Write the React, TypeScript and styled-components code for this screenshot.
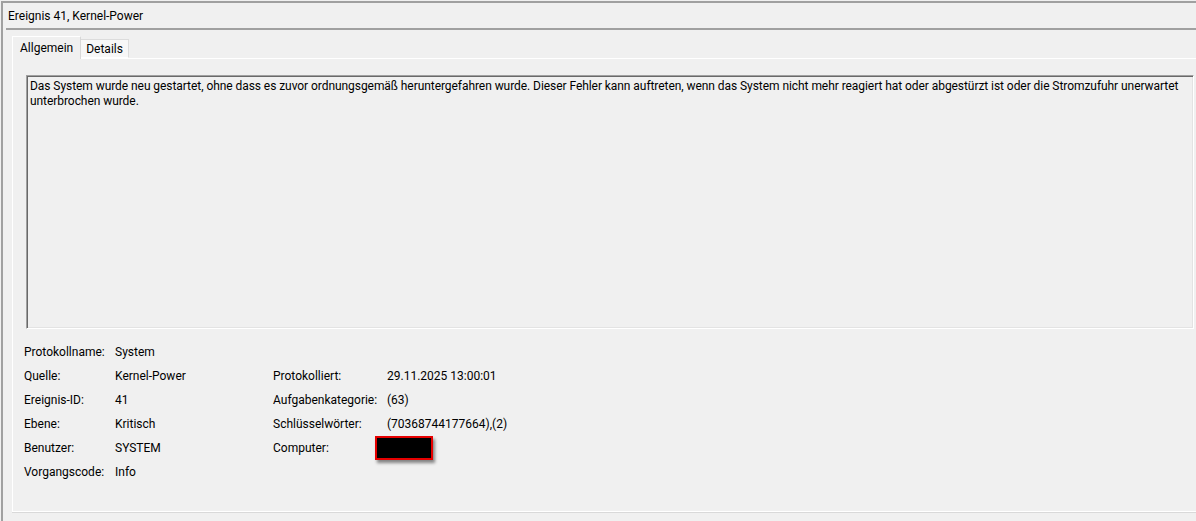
import React from "react";
import styled, { createGlobalStyle } from "styled-components";

const GlobalStyle = createGlobalStyle`
  html, body {
    margin: 0;
    padding: 0;
    background: #f0f0f0;
    overflow: hidden;
  }
  body {
    font-family: Roboto, "Liberation Sans", Arial, sans-serif;
    font-size: 12px;
    color: #000;
  }
`;

const Window = styled.div`
  width: 1212px;
  height: 518px;
  margin: 1px 0 0 1px;
  border-top: 2px solid #a0a0a0;
  border-left: 2px solid #a0a0a0;
  display: flex;
  flex-direction: column;
  background: #f0f0f0;
`;

const TitleBar = styled.div`
  height: 25px;
  margin-left: 3px;
  padding-left: 2px;
  display: flex;
  align-items: center;
  border-bottom: 2px solid #a0a0a0;
  font-size: 12px;
`;

const TabStrip = styled.div`
  display: flex;
  align-items: flex-end;
  margin: 6px 0 0 9px;
  height: 22px;
  position: relative;
  z-index: 1;
`;

const Tab = styled.div<{ $active?: boolean }>`
  box-sizing: border-box;
  height: ${(p) => (p.$active ? "23px" : "19px")};
  margin-bottom: ${(p) => (p.$active ? "-1px" : "0")};
  padding: 0 ${(p) => (p.$active ? "7px" : "5px")};
  padding-bottom: ${(p) => (p.$active ? "1px" : "0")};
  display: flex;
  align-items: center;
  justify-content: center;
  background: ${(p) => (p.$active ? "#f0f0f0" : "#f7f7f7")};
  border: 1px solid ${(p) => (p.$active ? "#fff" : "#dcdcdc")};
  border-bottom: ${(p) => (p.$active ? "none" : "1px solid #fff")};
  border-right-color: ${(p) => (p.$active ? "#d8d8d8" : "#dcdcdc")};
  border-left: ${(p) => (p.$active ? "1px solid #fff" : "none")};
`;

const Panel = styled.div`
  box-sizing: border-box;
  margin-left: 9px;
  height: 454px;
  border: 1px solid #fff;
  border-right: none;
  box-shadow: 0 1px 0 #d9d9d9;
  padding: 16px 0 0 13px;
  display: flex;
  flex-direction: column;
`;

const MessageBox = styled.div`
  box-sizing: border-box;
  width: 1168px;
  height: 254px;
  border: 1px solid;
  border-color: #a0a0a0 #fff #fff #a0a0a0;
  box-shadow: inset 1px 1px 0 #696969, inset -1px -1px 0 #e3e3e3;
  padding: 3px 2px 0 3px;
  line-height: 15px;
  letter-spacing: -0.06px;
`;

const Props = styled.div`
  margin: 11px 0 0 -2px;
  display: grid;
  grid-template-columns: 91px 158px 114px auto;
  grid-auto-rows: 24px;
  align-items: center;
  line-height: 24px;
`;

const Cell = styled.div`
  white-space: nowrap;
  display: flex;
  align-items: center;
  height: 24px;
`;

const Redacted = styled.div`
  box-sizing: border-box;
  width: 58px;
  height: 24px;
  margin-left: -12px;
  margin-top: -1px;
  background: #000;
  border: 2px solid #e60000;
  box-shadow: 2px 3px 3px rgba(0, 0, 0, 0.45);
`;

type Entry = { label: string; value: React.ReactNode };

const rows: [Entry, Entry | null][] = [
  [{ label: "Protokollname:", value: "System" }, null],
  [
    { label: "Quelle:", value: "Kernel-Power" },
    { label: "Protokolliert:", value: "29.11.2025 13:00:01" },
  ],
  [
    { label: "Ereignis-ID:", value: "41" },
    { label: "Aufgabenkategorie:", value: "(63)" },
  ],
  [
    { label: "Ebene:", value: "Kritisch" },
    { label: "Schlüsselwörter:", value: "(70368744177664),(2)" },
  ],
  [
    { label: "Benutzer:", value: "SYSTEM" },
    { label: "Computer:", value: <Redacted /> },
  ],
  [{ label: "Vorgangscode:", value: "Info" }, null],
];

const message =
  "Das System wurde neu gestartet, ohne dass es zuvor ordnungsgemäß heruntergefahren wurde. " +
  "Dieser Fehler kann auftreten, wenn das System nicht mehr reagiert hat oder abgestürzt ist " +
  "oder die Stromzufuhr unerwartet unterbrochen wurde.";

export default function App() {
  return (
    <>
      <GlobalStyle />
      <Window>
        <TitleBar>Ereignis 41, Kernel-Power</TitleBar>
        <TabStrip>
          <Tab $active>Allgemein</Tab>
          <Tab>Details</Tab>
        </TabStrip>
        <Panel>
          <MessageBox>{message}</MessageBox>
          <Props>
            {rows.map(([a, b], i) => (
              <React.Fragment key={i}>
                <Cell>{a.label}</Cell>
                <Cell>{a.value}</Cell>
                <Cell>{b ? b.label : ""}</Cell>
                <Cell>{b ? b.value : ""}</Cell>
              </React.Fragment>
            ))}
          </Props>
        </Panel>
      </Window>
    </>
  );
}
